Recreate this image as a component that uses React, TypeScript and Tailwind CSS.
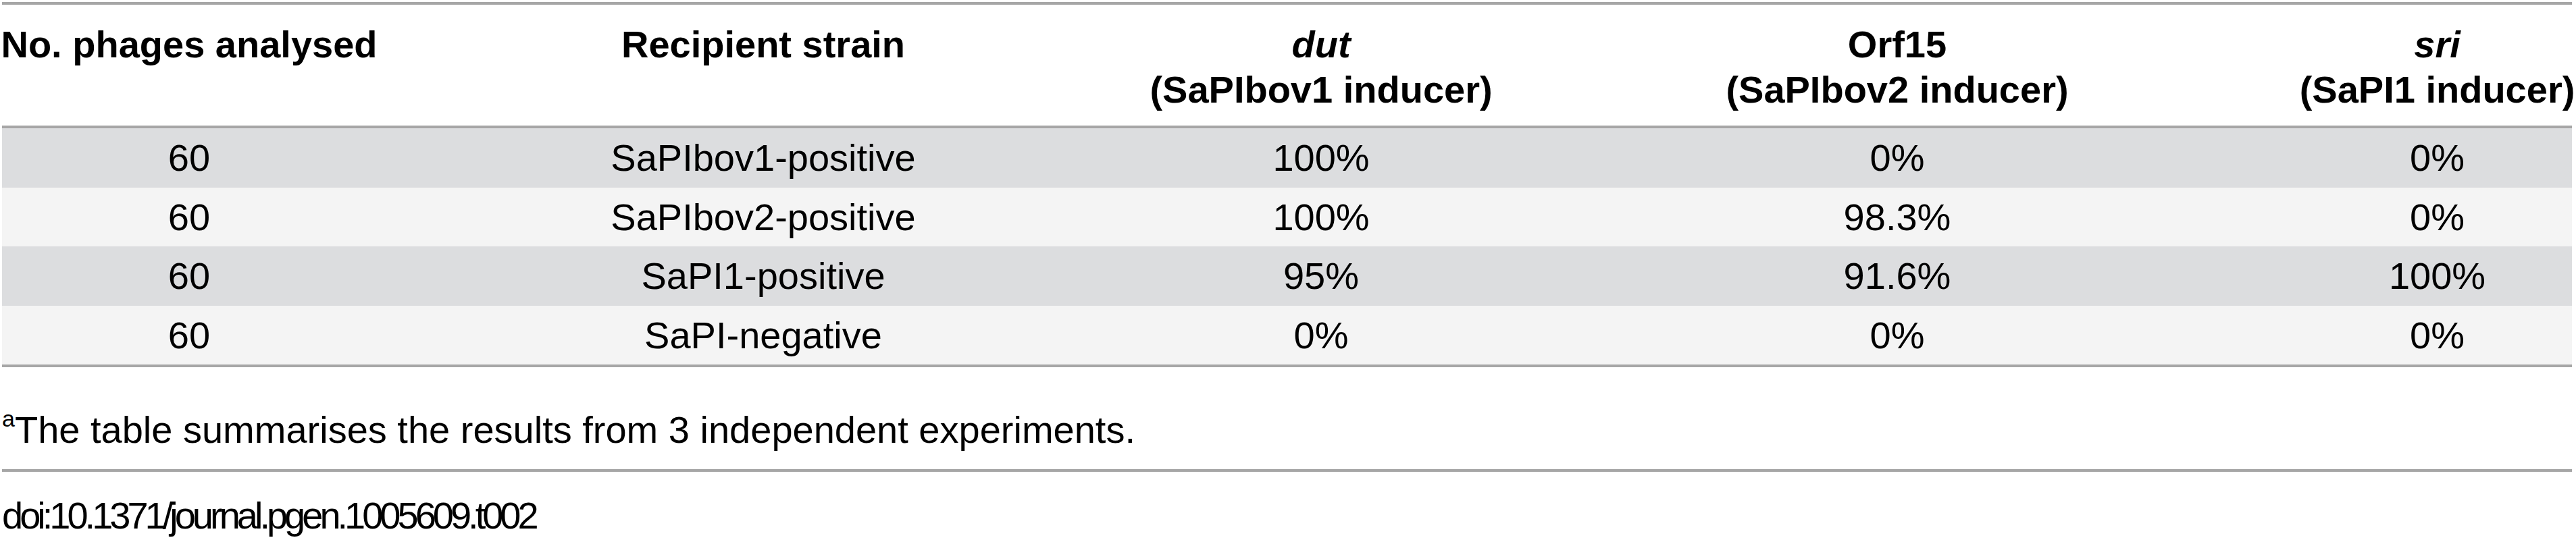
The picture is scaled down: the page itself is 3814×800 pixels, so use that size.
/**
 * App.tsx
 *
 * Table 2 — phage induction of SaPIs (PLOS Genetics style table render)
 * - header with two-line column titles
 * - zebra rows
 * - footnote + doi
 */

// ─── Data ─────────────────────────────────────────────────────────────────────

interface Row {
  phages: string;
  strain: string;
  dut: string;
  orf15: string;
  sri: string;
}

const ROWS: Row[] = [
  { phages: '60', strain: 'SaPIbov1-positive', dut: '100%', orf15: '0%', sri: '0%' },
  { phages: '60', strain: 'SaPIbov2-positive', dut: '100%', orf15: '98.3%', sri: '0%' },
  { phages: '60', strain: 'SaPI1-positive', dut: '95%', orf15: '91.6%', sri: '100%' },
  { phages: '60', strain: 'SaPI-negative', dut: '0%', orf15: '0%', sri: '0%' },
];

// column widths are fixed so the centres line up with the source render
const COLS = 'grid grid-cols-[554px_1146px_506px_1200px_399px]';

// ─── Cells ────────────────────────────────────────────────────────────────────

function Cell({ children }: { children: React.ReactNode }) {
  return <div className="flex justify-center whitespace-nowrap">{children}</div>;
}

function HeadCell({ title, sub, italic }: { title: string; sub?: string; italic?: boolean }) {
  return (
    <div className="flex flex-col items-center whitespace-nowrap font-bold">
      <span className={italic ? 'italic' : ''}>{title}</span>
      {sub && <span>{sub}</span>}
    </div>
  );
}

// ─── Page ─────────────────────────────────────────────────────────────────────

export default function App() {
  return (
    <div className="w-[3814px] h-[800px] overflow-hidden bg-white pt-[3px] font-['Liberation_Sans',Arial,sans-serif] text-[56px] leading-[67px] text-black">
      <div className="ml-[3px] w-[3805px]">
        {/* Header */}
        <div className={`${COLS} border-y-4 border-[#a6a6a6] pt-[25px] pb-[20px]`}>
          <HeadCell title="No. phages analysed" />
          <HeadCell title="Recipient strain" />
          <HeadCell title="dut" sub="(SaPIbov1 inducer)" italic />
          <HeadCell title="Orf15" sub="(SaPIbov2 inducer)" />
          <HeadCell title="sri" sub="(SaPI1 inducer)" italic />
        </div>

        {/* Body */}
        <div className="border-b-4 border-[#a6a6a6]">
          {ROWS.map((r, i) => (
            <div
              key={i}
              className={`${COLS} h-[87.5px] items-center ${i % 2 === 0 ? 'bg-[#dcdddf]' : 'bg-[#f4f4f4]'}`}
            >
              <Cell>{r.phages}</Cell>
              <Cell>{r.strain}</Cell>
              <Cell>{r.dut}</Cell>
              <Cell>{r.orf15}</Cell>
              <Cell>{r.sri}</Cell>
            </div>
          ))}
        </div>

        {/* Footnote */}
        <p className="mt-[59px] whitespace-nowrap">
          <span className="align-top text-[34px] leading-none">a</span>
          The table summarises the results from 3 independent experiments.
        </p>

        <div className="mt-[25px] border-t-4 border-[#a6a6a6]" />

        {/* doi */}
        <p className="mt-[31px] whitespace-nowrap tracking-[-5px]">doi:10.1371/journal.pgen.1005609.t002</p>
      </div>
    </div>
  );
}
